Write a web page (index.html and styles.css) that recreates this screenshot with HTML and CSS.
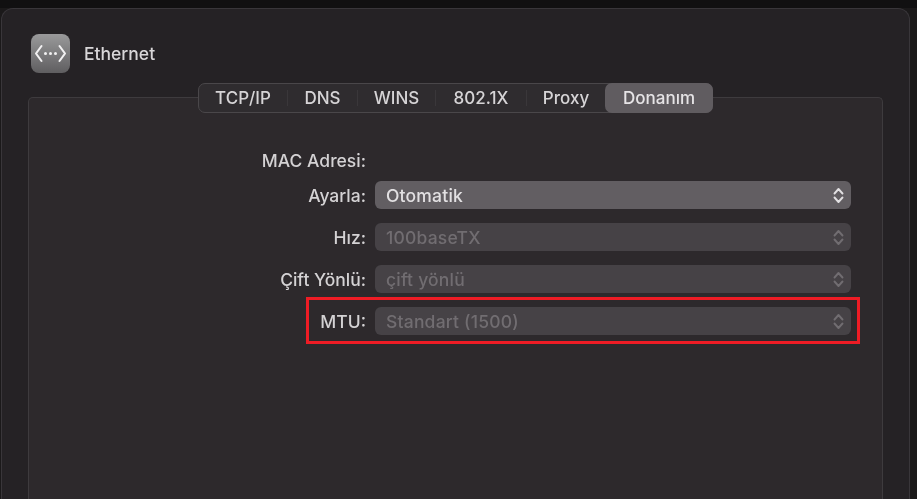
FILE: index.html
```html
<!DOCTYPE html>
<html lang="en">
<head>
<meta charset="UTF-8">
<meta name="viewport" content="width=device-width, initial-scale=1.0">
<title>Ethernet</title>
<link rel="stylesheet" href="styles.css">
</head>
<body>
    <div class="window">
        <div class="header">
            <div class="app-icon">
                <svg width="33" height="19" viewBox="0 0 33 19" fill="none" stroke="#f2f1f2" stroke-width="2.1" stroke-linecap="round" stroke-linejoin="round">
                    <path d="M7.5 2 L2 9.5 L7.5 17"/>
                    <path d="M25.5 2 L31 9.5 L25.5 17"/>
                    <circle cx="11.5" cy="9.5" r="1.5" fill="#f2f1f2" stroke="none"/>
                    <circle cx="16.5" cy="9.5" r="1.5" fill="#f2f1f2" stroke="none"/>
                    <circle cx="21.5" cy="9.5" r="1.5" fill="#f2f1f2" stroke="none"/>
                </svg>
            </div>
            <div class="title">Ethernet</div>
        </div>
        <div class="panel">
            <div class="tabs">
                <div class="tab tab-tcp">TCP/IP</div>
                <div class="tab tab-dns">DNS</div>
                <div class="tab tab-wins">WINS</div>
                <div class="tab tab-8021x">802.1X</div>
                <div class="tab tab-proxy">Proxy</div>
                <div class="tab tab-active">Donanım</div>
            </div>
            <div class="form">
                <div class="row row-mac">
                    <div class="label">MAC Adresi:</div>
                </div>
                <div class="row">
                    <div class="label">Ayarla:</div>
                    <div class="select">
                        <span>Otomatik</span>
                        <svg class="updown" width="11" height="17" viewBox="0 0 11 17" fill="none" stroke="currentColor" stroke-width="1.9" stroke-linecap="round" stroke-linejoin="round"><path d="M1.5 6.5 L5.5 2 L9.5 6.5"/><path d="M1.5 10.5 L5.5 15 L9.5 10.5"/></svg>
                    </div>
                </div>
                <div class="row">
                    <div class="label">Hız:</div>
                    <div class="select disabled">
                        <span>100baseTX</span>
                        <svg class="updown" width="11" height="17" viewBox="0 0 11 17" fill="none" stroke="currentColor" stroke-width="1.9" stroke-linecap="round" stroke-linejoin="round"><path d="M1.5 6.5 L5.5 2 L9.5 6.5"/><path d="M1.5 10.5 L5.5 15 L9.5 10.5"/></svg>
                    </div>
                </div>
                <div class="row">
                    <div class="label">Çift Yönlü:</div>
                    <div class="select disabled">
                        <span>çift yönlü</span>
                        <svg class="updown" width="11" height="17" viewBox="0 0 11 17" fill="none" stroke="currentColor" stroke-width="1.9" stroke-linecap="round" stroke-linejoin="round"><path d="M1.5 6.5 L5.5 2 L9.5 6.5"/><path d="M1.5 10.5 L5.5 15 L9.5 10.5"/></svg>
                    </div>
                </div>
                <div class="row row-marked">
                    <div class="label">MTU:</div>
                    <div class="select disabled">
                        <span>Standart (1500)</span>
                        <svg class="updown" width="11" height="17" viewBox="0 0 11 17" fill="none" stroke="currentColor" stroke-width="1.9" stroke-linecap="round" stroke-linejoin="round"><path d="M1.5 6.5 L5.5 2 L9.5 6.5"/><path d="M1.5 10.5 L5.5 15 L9.5 10.5"/></svg>
                    </div>
                </div>
            </div>
        </div>
    </div>
</body>
</html>
```

FILE: styles.css
```css
html, body {
    height: 100%;
}
body {
    margin: 0;
    padding: 8px 7px 0 1px;
    box-sizing: border-box;
    overflow: hidden;
    font-family: Inter, "Liberation Sans", sans-serif;
    font-size: 17.5px;
    font-weight: 500;
    background-color: #1b191a;
    box-shadow: inset 0 8px 0 #111011;
}
.window {
    display: flex;
    flex-direction: column;
    height: 100%;
    box-sizing: border-box;
    padding: 0 26px;
    background-color: #252225;
    border: 1px solid #39363a;
    border-bottom: 0;
    border-radius: 12px 12px 0 0;
    filter: blur(0.35px);
}
.header {
    display: flex;
    align-items: center;
    gap: 14px;
    height: 40px;
    margin-top: 24px;
    padding-left: 3px;
    color: #d8d6d8;
}
.app-icon {
    width: 39px;
    height: 39px;
    border-radius: 8px;
    background: linear-gradient(#9a9a9b, #5f5e60);
    display: flex;
    align-items: center;
    justify-content: center;
}
.panel {
    flex: 1;
    margin-top: 24px;
    background-color: #2d292c;
    border: 1px solid #3e3b3e;
    border-bottom: 0;
    border-radius: 5px 5px 0 0;
    box-sizing: border-box;
}
.tabs {
    display: flex;
    width: 515px;
    height: 30px;
    box-sizing: border-box;
    margin: -15px 0 0 169px;
    background-color: #2f2c2f;
    border: 1px solid #4a474a;
    border-radius: 7px;
    color: #d6d4d6;
    font-size: 17px;
}
.tab {
    display: flex;
    align-items: center;
    justify-content: center;
    box-sizing: border-box;
    border-right: 1px solid #3a373a;
    margin: 6px 0;
}
.tab-tcp { width: 89px; }
.tab-dns { width: 70px; }
.tab-wins { width: 78px; }
.tab-8021x { width: 91px; }
.tab-proxy { width: 78px; border-right: 0; }
.tab-active {
    flex: 1;
    margin: -1px -1px -1px 0;
    background-color: #605c60;
    border: 0;
    border-radius: 7px;
    color: #e6e4e6;
}
.form {
    display: flex;
    flex-direction: column;
    gap: 14px;
    margin-top: 46px;
    padding: 0 31px 0 0;
}
.row {
    display: flex;
    align-items: center;
    gap: 9px;
    height: 28px;
    color: #d4d2d4;
}
.row-mac {
    height: 20px;
    margin-top: -9px;
    margin-bottom: -3px;
}
.label {
    width: 337px;
    text-align: right;
}
.select {
    flex: 1;
    display: flex;
    align-items: center;
    justify-content: space-between;
    height: 28px;
    box-sizing: border-box;
    padding: 0 7px 0 11px;
    background-color: #625e62;
    border-radius: 6px;
    color: #e2e0e2;
    letter-spacing: 0.2px;
}
.select.disabled {
    background-color: #464246;
    color: #716d71;
}
.row-marked {
    position: relative;
}
.row-marked::after {
    content: "";
    position: absolute;
    left: 277px;
    right: -9px;
    top: -10px;
    bottom: -9px;
    border: 3px solid #ee1c25;
}
```
